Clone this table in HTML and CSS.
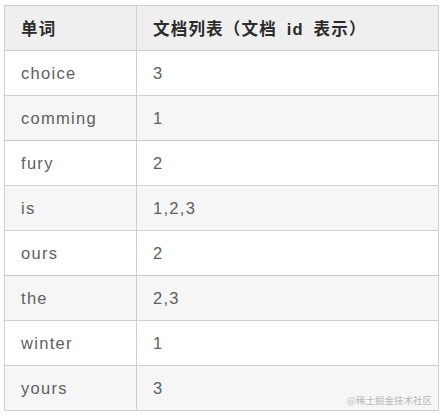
FILE: index.html
```html
<!DOCTYPE html>
<html lang="zh">
<head>
<meta charset="utf-8">
<link rel="stylesheet" href="styles.css">
</head>
<body>
<div class="wrap">
<table class="tbl">
  <thead>
    <tr><th class="c1">单词</th><th class="c2">文档列表（文档 id 表示）</th></tr>
  </thead>
  <tbody>
    <tr><td>choice</td><td>3</td></tr>
    <tr><td>comming</td><td>1</td></tr>
    <tr><td>fury</td><td>2</td></tr>
    <tr><td>is</td><td>1,2,3</td></tr>
    <tr><td>ours</td><td>2</td></tr>
    <tr><td>the</td><td>2,3</td></tr>
    <tr><td>winter</td><td>1</td></tr>
    <tr><td>yours</td><td>3</td></tr>
  </tbody>
</table>
<span class="mark">@稀土掘金技术社区</span>
</div>
</body>
</html>
```
FILE: styles.css
```css
html, body {
  margin: 0;
  padding: 0;
  background: #ffffff;
}
body {
  padding: 5px 0 0 4px;
}
.wrap {
  position: relative;
  width: 435px;
}
.tbl {
  border-collapse: collapse;
  width: 435px;
  table-layout: fixed;
  font-family: "Liberation Sans", "Noto Sans CJK SC", sans-serif;
}
.tbl th, .tbl td {
  border: 1px solid #cfcfcf;
  height: 45px;
  padding: 0 0 0 16px;
  text-align: left;
  vertical-align: middle;
  box-sizing: border-box;
}
.c1 { width: 132px; }
.tbl th {
  background: #efefef;
  color: #2b2b2b;
  font-weight: bold;
  font-size: 16.5px;
  letter-spacing: 1.2px;
  word-spacing: 4px;
}
.tbl td {
  color: #606060;
  font-size: 16.5px;
  letter-spacing: 1.3px;
  font-weight: normal;
}
.tbl tbody tr:nth-child(even) td {
  background: #f6f6f6;
}
.tbl tbody tr:nth-child(odd) td {
  background: #ffffff;
}
.mark {
  position: absolute;
  right: 7px;
  bottom: 4px;
  font-family: "Noto Sans CJK SC", sans-serif;
  font-size: 9.5px;
  color: #b8b8b8;
}
```
